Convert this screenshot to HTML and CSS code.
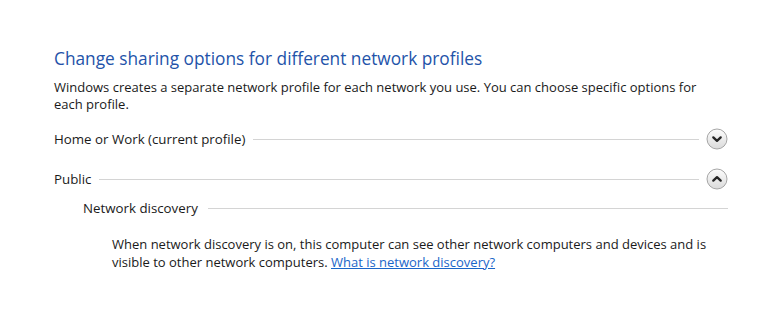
FILE: index.html
```html
<!DOCTYPE html>
<html lang="en">
<head>
    <meta charset="UTF-8">
    <title>Advanced sharing settings</title>
    <link rel="stylesheet" href="styles.css">
</head>
<body>
    <div class="page">
        <h1 class="title">Change sharing options for different network profiles</h1>
        <p class="intro">Windows creates a separate network profile for each network you use. You can choose specific options for each profile.</p>

        <div class="profile-head home">
            <span>Home or Work (current profile)</span>
            <span class="rule"></span>
            <button class="toggle" aria-label="Expand">
                <svg width="22" height="22" viewBox="0 0 22 22">
                    <defs>
                        <linearGradient id="g1" x1="0" y1="0" x2="0" y2="1">
                            <stop offset="0" stop-color="#fdfdfd"/>
                            <stop offset="1" stop-color="#dadada"/>
                        </linearGradient>
                    </defs>
                    <circle cx="11" cy="11" r="10" fill="url(#g1)" stroke="#a6a6a6"/>
                    <path d="M7.3 9.4 L11 12.9 L14.7 9.4" fill="none" stroke="#262626" stroke-width="2.3" stroke-linecap="round" stroke-linejoin="round"/>
                </svg>
            </button>
        </div>

        <div class="profile-head public">
            <span>Public</span>
            <span class="rule"></span>
            <button class="toggle" aria-label="Collapse">
                <svg width="22" height="22" viewBox="0 0 22 22">
                    <circle cx="11" cy="11" r="10" fill="url(#g1)" stroke="#a6a6a6"/>
                    <path d="M7.3 12.6 L11 9.1 L14.7 12.6" fill="none" stroke="#262626" stroke-width="2.3" stroke-linecap="round" stroke-linejoin="round"/>
                </svg>
            </button>
        </div>

        <div class="section">
            <div class="section-head">
                <span>Network discovery</span>
                <span class="rule"></span>
            </div>
            <p class="section-text">When network discovery is on, this computer can see other network computers and devices and is visible to other network computers. <a href="#">What is network discovery?</a></p>
        </div>
    </div>
</body>
</html>
```

FILE: styles.css
```css
* {
    margin: 0;
    padding: 0;
    box-sizing: border-box;
}

body {
    font-family: "Open Sans", "Noto Sans", sans-serif;
    font-size: 13px;
    color: #1a1a1a;
    background: #ffffff;
}

.page {
    width: 728px;
    padding: 47px 0 0 54px;
}

.title {
    font-size: 17.3px;
    font-weight: 400;
    color: #2353a9;
    line-height: 24px;
    margin-bottom: 8px;
}

.intro {
    line-height: 17px;
    margin-bottom: 14px;
}

.rule {
    flex: 1;
    height: 1px;
    background: #d4d4d4;
}

.profile-head {
    display: flex;
    align-items: center;
    gap: 8px;
    height: 24px;
    font-size: 13.3px;
}

.profile-head.public {
    margin-top: 16px;
}

.toggle {
    border: none;
    background: none;
    display: flex;
    margin-left: -1px;
}

.section {
    padding-left: 29px;
    margin-top: 5px;
}

.section-head {
    display: flex;
    align-items: center;
    gap: 10px;
    height: 24px;
    font-size: 13.3px;
}

.section-text {
    padding-left: 29px;
    margin-top: 15px;
    margin-right: -10px;
    line-height: 18px;
}

.section-text a {
    color: #1a66c9;
}
```
